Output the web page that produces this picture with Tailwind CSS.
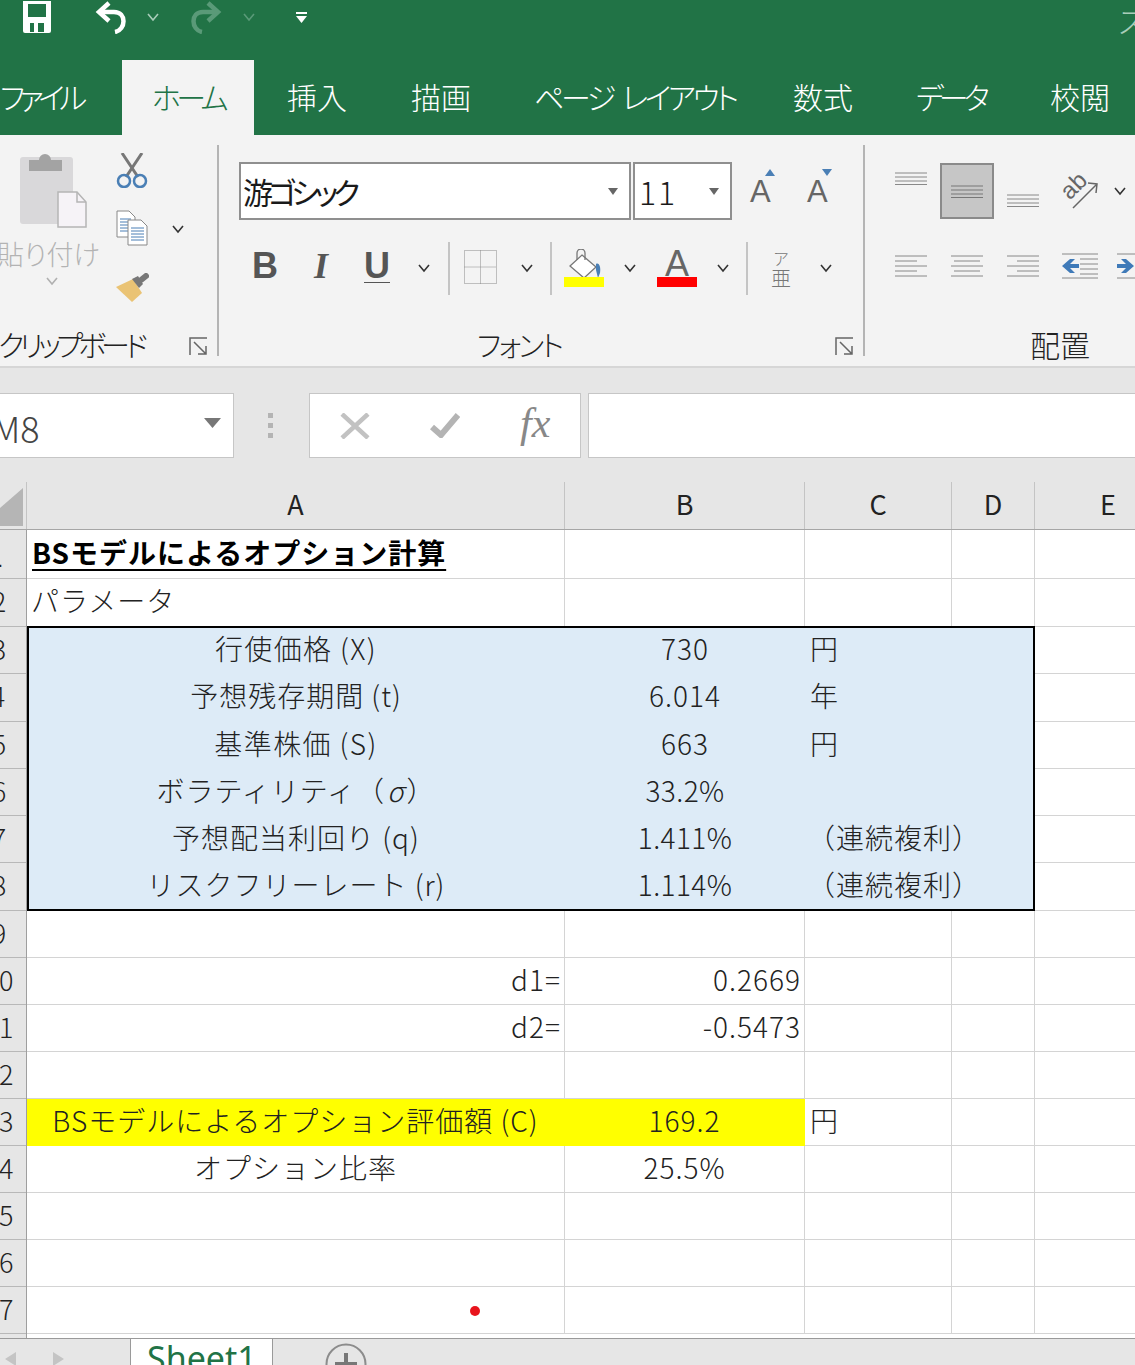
<!DOCTYPE html>
<html lang="ja">

<head>
  <meta charset="UTF-8">
  <title>Excel - BS model</title>
  <script src="https://cdn.jsdelivr.net/npm/@tailwindcss/browser@4"></script>
</head>

<body class="bg-white">
  <div class="w-[1135px] h-[1365px] overflow-hidden font-['Noto_Sans_CJK_JP',sans-serif] font-light text-[#222]">

    <!-- Title bar -->
    <div class="h-[60px] bg-[#217346] flex items-start relative overflow-hidden">
      <svg class="ml-[21px] w-[32px] h-[34px] shrink-0" viewBox="0 0 32 34">
        <path fill="#fff" d="M2 1h28v30a2 2 0 0 1-2 2H4a2 2 0 0 1-2-2z" />
        <rect x="7" y="4" width="18" height="13" fill="#217346" />
        <rect x="8" y="22" width="16" height="11" fill="#fff" />
        <rect x="9" y="23" width="4" height="9" fill="#217346" />
        <rect x="17" y="23" width="6" height="9" fill="#217346" />
      </svg>
      <svg class="ml-[42px] w-[32px] h-[34px] shrink-0" viewBox="0 0 32 34" fill="none" stroke="#fff" stroke-width="4.500">
        <path d="M14 3 4 12l10 9" />
        <path d="M5 12h14c13 0 12 18 1 20" />
      </svg>
      <svg class="ml-[19px] mt-[13px] w-[14px] h-[9px] shrink-0" viewBox="0 0 14 9" fill="none" stroke="#a9cdb9" stroke-width="1.600"><path d="m2 1 5 6 5-6" /></svg>
      <svg class="ml-[30px] w-[32px] h-[34px] shrink-0" viewBox="0 0 32 34" fill="none" stroke="#5a9a78" stroke-width="4.500">
        <path d="m18 3 10 9-10 9" />
        <path d="M27 12H13C0 12 1 30 12 32" />
      </svg>
      <svg class="ml-[20px] mt-[13px] w-[14px] h-[9px] shrink-0" viewBox="0 0 14 9" fill="none" stroke="#5a9a78" stroke-width="1.600"><path d="m2 1 5 6 5-6" /></svg>
      <svg class="ml-[39px] mt-[11px] w-[13px] h-[13px] shrink-0" viewBox="0 0 13 13" fill="#fff">
        <rect x="1" y="1" width="11" height="2" />
        <path d="M1 5h11l-5.500 7z" />
      </svg>
      <span class="absolute left-[1117px] top-[0px] text-[30px] leading-[40px] text-[#a9cdb9]">ス</span>
    </div>

    <!-- Tabs -->
    <div class="h-[75px] bg-[#217346] flex text-[30px] leading-none text-white whitespace-nowrap [font-feature-settings:'palt'] *:shrink-0 *:pt-[21px]">
      <div class="w-[122px] tracking-[-5.500px]">ファイル</div>
      <div class="w-[132px] bg-[#f3f3f3] text-[#217346] text-center tracking-[-4.500px]">ホーム</div>
      <div class="ml-[33px] w-[60px]">挿入</div>
      <div class="ml-[64px] w-[60px]">描画</div>
      <div class="ml-[63px] w-[196px] tracking-[-3.400px] [word-spacing:6px]">ページ レイアウト</div>
      <div class="ml-[63px] w-[60px]">数式</div>
      <div class="ml-[63px] w-[71px] tracking-[-5px]">データ</div>
      <div class="ml-[63px] w-[60px]">校閲</div>
    </div>

    <!-- Ribbon -->
    <div class="h-[233px] bg-[#f3f3f3] border-b-2 border-[#d6d6d6] flex">

      <!-- Clipboard group -->
      <div class="w-[217px] flex flex-col shrink-0">
        <div class="h-[188px] flex">
          <div class="w-[104px] flex flex-col pt-[18px]">
            <svg class="ml-[20px] w-[67px] h-[75px]" viewBox="0 0 67 75">
              <rect x="0" y="4" width="53" height="67" rx="3" fill="#d9d8da" />
              <path fill="#a3a3a3" d="M9 7h10a6 6 0 0 1 12 0h11v11H9z" />
              <path fill="#f6f3f7" stroke="#b5b5b5" stroke-width="1.500" d="M38 39h19l9 10v25H38z" />
              <path fill="none" stroke="#b5b5b5" stroke-width="1.500" d="M57 39v10h9" />
            </svg>
            <span class="text-[#b3b3b3] text-[27px] leading-none -ml-[3px] mt-[12px] whitespace-nowrap [font-feature-settings:'palt']">貼り付け</span>
            <svg class="ml-[45px] mt-[10px] w-[14px] h-[9px]" viewBox="0 0 14 9" fill="none" stroke="#b0b0b0" stroke-width="1.600"><path d="m2 1 5 6 5-6" /></svg>
          </div>
          <div class="ml-[12px] w-[34px] flex flex-col pt-[18px]">
            <svg class="w-[32px] h-[35px]" viewBox="0 0 32 35">
              <path stroke="#777" stroke-width="3" fill="none" d="M6 0l16 24M26 0 10 24" />
              <circle cx="8" cy="28" r="6" fill="none" stroke="#4a7fb5" stroke-width="2.500" />
              <circle cx="24" cy="28" r="6" fill="none" stroke="#4a7fb5" stroke-width="2.500" />
            </svg>
            <svg class="mt-[22px] w-[32px] h-[36px]" viewBox="0 0 32 36">
              <path fill="#fff" stroke="#888" d="M1 1h12l6 6v20H1z" />
              <path stroke="#4a7fb5" d="M4 9h11M4 12h11M4 15h11M4 18h11M4 21h11" />
              <path fill="#fff" stroke="#888" d="M12 10h13l6 6v19H12z" />
              <path stroke="#4a7fb5" d="M15 18h13M15 21h13M15 24h13M15 27h13M15 30h13" />
            </svg>
            <svg class="mt-[27px] w-[33px] h-[29px]" viewBox="0 0 33 29">
              <path fill="#eac374" d="M0 14 17 6l9 14-10 9z" />
              <path fill="#777" d="m16 6 6-3 5 8-4 4z" />
              <path stroke="#777" stroke-width="6" stroke-linecap="round" d="m25 7 5-4" />
            </svg>
          </div>
          <svg class="ml-[21px] mt-[90px] w-[14px] h-[9px]" viewBox="0 0 14 9" fill="none" stroke="#333" stroke-width="1.600"><path d="m2 1 5 6 5-6" /></svg>
        </div>
        <div class="h-[44px] flex items-center">
          <span class="text-[29px] leading-none whitespace-nowrap tracking-[-4.800px] [font-feature-settings:'palt'] -ml-[2px]">クリップボード</span>
          <svg class="ml-auto mr-[9px] mt-[4px] w-[19px] h-[19px]" viewBox="0 0 19 19" fill="none" stroke="#666" stroke-width="1.500">
            <path d="M1 18V1h17M5 5l12 12M17 9v8H9" />
          </svg>
        </div>
      </div>
      <div class="w-[2px] h-[211px] mt-[10px] bg-[#b4b4b4] shrink-0"></div>

      <!-- Font group -->
      <div class="w-[644px] flex flex-col shrink-0">
        <div class="h-[188px] flex flex-col">
          <div class="mt-[27px] h-[58px] flex items-center">
            <div class="ml-[20px] w-[392px] h-[58px] bg-white border-2 border-[#8f8f8f] flex items-center pl-[2px] pr-[10px]">
              <span class="text-[30px] leading-none text-[#1a1a1a] font-normal tracking-[-4.800px] [font-feature-settings:'palt']">游ゴシック</span>
              <svg class="ml-auto w-[12px] h-[7px]" viewBox="0 0 12 7" fill="#666"><path d="M1 0h10L6 7z" /></svg>
            </div>
            <div class="ml-[2px] w-[99px] h-[58px] bg-white border-2 border-[#8f8f8f] flex items-center pl-[4px] pr-[10px]">
              <span class="text-[32px] leading-none text-[#1a1a1a] tracking-[2px]">11</span>
              <svg class="ml-auto w-[12px] h-[7px]" viewBox="0 0 12 7" fill="#666"><path d="M1 0h10L6 7z" /></svg>
            </div>
            <div class="ml-[18px] w-[30px] relative font-['Liberation_Sans',sans-serif] font-normal text-[31px] leading-none text-[#666]">A
              <svg class="absolute left-[14px] -top-[7px] w-[12px] h-[7px]" viewBox="0 0 12 7" fill="#4a7fb5"><path d="M1 7h10L6 0z" /></svg>
            </div>
            <div class="ml-[27px] w-[30px] relative font-['Liberation_Sans',sans-serif] font-normal text-[31px] leading-none text-[#666]">A
              <svg class="absolute left-[14px] -top-[7px] w-[12px] h-[7px]" viewBox="0 0 12 7" fill="#4a7fb5"><path d="M1 0h10L6 7z" /></svg>
            </div>
          </div>
          <div class="mt-[22px] h-[53px] flex items-center">
            <span class="ml-[23px] w-[46px] text-center font-['Liberation_Sans',sans-serif] font-bold text-[36px] leading-none text-[#555] mb-[6px]">B</span>
            <span class="w-[66px] text-center font-['Liberation_Serif',serif] italic font-bold text-[36px] leading-none text-[#555] mb-[6px]">I</span>
            <span class="w-[46px] text-center font-['Liberation_Sans',sans-serif] font-bold text-[36px] leading-none text-[#555] mb-[6px] underline decoration-1 underline-offset-[4px]">U</span>
            <svg class="ml-[17px] w-[14px] h-[9px]" viewBox="0 0 14 9" fill="none" stroke="#333" stroke-width="1.600"><path d="m2 1 5 6 5-6" /></svg>
            <div class="ml-[17px] w-[2px] h-[53px] bg-[#c4c4c4]"></div>
            <svg class="ml-[14px] mb-[3px] w-[33px] h-[34px]" viewBox="0 0 33 34" fill="none" stroke="#888" stroke-dasharray="1 1">
              <path d="M.5.500h32v33H.5zM16.500.500v33M.5 17h32" />
            </svg>
            <svg class="ml-[23px] w-[14px] h-[9px]" viewBox="0 0 14 9" fill="none" stroke="#333" stroke-width="1.600"><path d="m2 1 5 6 5-6" /></svg>
            <div class="ml-[16px] w-[2px] h-[53px] bg-[#c4c4c4]"></div>
            <div class="ml-[12px] w-[40px] h-[39px] flex flex-col items-center -mt-[1px]">
              <svg class="w-[36px] h-[29px] -mb-[1px]" viewBox="0 0 36 29">
                <path fill="#fff" stroke="#777" stroke-width="1.300" d="M16 6 30 18 18 29 4 17z" />
                <path fill="none" stroke="#777" stroke-width="1.300" d="M11 11V4a4 4 0 0 1 8 0v7" />
                <path fill="#4a7fb5" d="M30 15c3-2 5 3 4 9l-2 5-2-8z" />
              </svg>
              <div class="w-[40px] h-[10px] bg-[#ffff00]"></div>
            </div>
            <svg class="ml-[19px] w-[14px] h-[9px]" viewBox="0 0 14 9" fill="none" stroke="#333" stroke-width="1.600"><path d="m2 1 5 6 5-6" /></svg>
            <div class="ml-[20px] w-[40px] h-[37px] flex flex-col items-center">
              <span class="font-['Liberation_Sans',sans-serif] font-normal text-[36px] leading-[27px] text-[#666]">A</span>
              <div class="w-[40px] h-[10px] bg-[#ff0000]"></div>
            </div>
            <svg class="ml-[19px] w-[14px] h-[9px]" viewBox="0 0 14 9" fill="none" stroke="#333" stroke-width="1.600"><path d="m2 1 5 6 5-6" /></svg>
            <div class="ml-[16px] w-[2px] h-[53px] bg-[#c4c4c4]"></div>
            <div class="ml-[21px] w-[24px] flex flex-col items-center gap-[2px] text-[#777] leading-none">
              <span class="text-[16px] h-[16px]">ア</span>
              <span class="text-[20px] h-[20px]">亜</span>
            </div>
            <svg class="ml-[26px] w-[14px] h-[9px]" viewBox="0 0 14 9" fill="none" stroke="#333" stroke-width="1.600"><path d="m2 1 5 6 5-6" /></svg>
          </div>
        </div>
        <div class="h-[44px] flex items-center">
          <span class="ml-[258px] text-[29px] leading-none tracking-[-2.700px] [font-feature-settings:'palt']">フォント</span>
          <svg class="ml-auto mr-[9px] mt-[4px] w-[19px] h-[19px]" viewBox="0 0 19 19" fill="none" stroke="#666" stroke-width="1.500">
            <path d="M1 18V1h17M5 5l12 12M17 9v8H9" />
          </svg>
        </div>
      </div>
      <div class="w-[2px] h-[211px] mt-[10px] bg-[#b4b4b4] shrink-0"></div>

      <!-- Alignment group -->
      <div class="flex-1 flex flex-col overflow-hidden">
        <div class="h-[188px] flex flex-col">
          <div class="mt-[27px] h-[58px] flex items-center shrink-0">
            <svg class="ml-[30px] self-start mt-[10px] w-[32px] h-[13px] shrink-0" viewBox="0 0 32 13" stroke="#888"><path d="M0 1h32M0 5h32M0 9h32M0 12.500h32" /></svg>
            <div class="ml-[13px] w-[54px] h-[56px] bg-[#c6c6c6] border-2 border-[#8a8a8a] flex items-center justify-center shrink-0">
              <svg class="w-[32px] h-[13px]" viewBox="0 0 32 13" stroke="#777"><path d="M0 1h32M0 5h32M0 9h32M0 12.500h32" /></svg>
            </div>
            <svg class="ml-[13px] self-end mb-[13px] w-[32px] h-[13px] shrink-0" viewBox="0 0 32 13" stroke="#888"><path d="M0 1h32M0 5h32M0 9h32M0 12.500h32" /></svg>
            <svg class="ml-[23px] w-[36px] h-[35px] shrink-0 overflow-visible" viewBox="0 0 36 35" fill="none" stroke="#666" stroke-width="1.500">
              <path d="m11 34 24-24M26 9l9 1-1 9" />
              <text x="0" y="20" transform="rotate(-45 12 14)" font-family="Liberation Sans, sans-serif" font-size="24" fill="#666" stroke="none">ab</text>
            </svg>
            <svg class="ml-[15px] w-[14px] h-[9px] shrink-0" viewBox="0 0 14 9" fill="none" stroke="#333" stroke-width="1.600"><path d="m2 1 5 6 5-6" /></svg>
          </div>
          <div class="mt-[33px] h-[26px] flex items-center shrink-0">
            <svg class="ml-[30px] w-[32px] h-[22px] shrink-0" viewBox="0 0 32 22" stroke="#888"><path d="M0 1h32M0 6h22M0 11h32M0 16h22M0 21h32" /></svg>
            <svg class="ml-[24px] w-[32px] h-[22px] shrink-0" viewBox="0 0 32 22" stroke="#888"><path d="M0 1h32M3 6h26M0 11h32M3 16h26M0 21h32" /></svg>
            <svg class="ml-[24px] w-[32px] h-[22px] shrink-0" viewBox="0 0 32 22" stroke="#888"><path d="M0 1h32M10 6h22M0 11h32M10 16h22M0 21h32" /></svg>
            <svg class="ml-[23px] w-[36px] h-[26px] shrink-0" viewBox="0 0 36 26">
              <path stroke="#888" d="M0 1h36M18 6h18M18 11h18M18 16h18M18 21h18M0 25h36" />
              <path fill="#3f7ab8" d="M0 13 8 6h5l-5 5h9v4H8l5 5H8z" />
            </svg>
            <svg class="ml-[19px] w-[36px] h-[26px] shrink-0" viewBox="0 0 36 26">
              <path stroke="#888" d="M0 1h36M0 25h36" />
              <path fill="#3f7ab8" d="M17 13 9 6H4l5 5H0v4h9l-5 5h5z" />
            </svg>
          </div>
        </div>
        <div class="h-[44px] flex items-center">
          <span class="ml-[165px] text-[30px] leading-none">配置</span>
        </div>
      </div>
    </div>

    <!-- Formula bar -->
    <div class="h-[114px] bg-[#e6e6e6] pt-[25px] flex items-start">
      <div class="w-[234px] h-[65px] bg-white border border-l-0 border-[#c6c6c6] flex items-center pr-[12px] overflow-hidden">
        <span class="-ml-[8px] text-[36px] leading-none text-[#444] mt-[3px]">M8</span>
        <svg class="ml-auto -mt-[5px] w-[17px] h-[10px]" viewBox="0 0 17 10" fill="#777"><path d="M0 0h17L8.500 10z" /></svg>
      </div>
      <div class="ml-[34px] mt-[20px] w-[5px] flex flex-col gap-[5px]">
        <div class="h-[5px] bg-[#b4b4b4]"></div>
        <div class="h-[5px] bg-[#b4b4b4]"></div>
        <div class="h-[5px] bg-[#b4b4b4]"></div>
      </div>
      <div class="ml-[36px] w-[272px] h-[65px] bg-white border border-[#c6c6c6] flex items-center">
        <svg class="ml-[30px] w-[30px] h-[26px]" viewBox="0 0 30 26" fill="none" stroke="#c2c2c2" stroke-width="4.500"><path d="m2 1 26 24M28 1 2 25" /></svg>
        <svg class="ml-[60px] w-[30px] h-[25px]" viewBox="0 0 30 25" fill="none" stroke="#b4b4b4" stroke-width="6"><path d="m2 14 9 8L28 2" /></svg>
        <span class="ml-[60px] w-[32px] -mt-[5px] font-['Liberation_Serif',serif] italic text-[42px] leading-none text-[#888]">fx</span>
      </div>
      <div class="ml-[7px] flex-1 h-[65px] bg-white border border-r-0 border-[#c6c6c6]"></div>
    </div>

    <!-- Column header -->
    <div class="h-[48px] bg-[#e6e6e6] flex border-b border-[#a6a6a6] text-[27px] leading-none text-[#222] font-normal overflow-hidden *:flex *:items-center *:justify-center *:pb-[5px] *:shrink-0 *:border-r *:border-[#c4c4c4]">
      <div class="w-[27px] !items-end !justify-start !pb-0">
        <svg class="mb-[3px] w-[23px] h-[38px]" viewBox="0 0 23 38" fill="#b5b5b5"><path d="M23 0v38H0V20z" /></svg>
      </div>
      <div class="w-[538px]">A</div>
      <div class="w-[240px]">B</div>
      <div class="w-[147px]">C</div>
      <div class="w-[83px]">D</div>
      <div class="w-[147px]">E</div>
    </div>

    <!-- Sheet -->
    <div class="h-[808px] flex overflow-hidden">
      <!-- Row numbers, centred on the window edge because the window is scrolled -->
      <div class="w-[27px] shrink-0 bg-[#e6e6e6] border-r border-[#9f9f9f] text-[27px] leading-none text-[#222] *:border-b *:border-[#b8b8b8] *:flex *:items-center *:overflow-hidden *:pb-[4px]">
        <div class="h-[49px]"><span class="-ml-[45px] w-[80px] shrink-0 text-center mt-[10px] font-['DejaVu_Sans',sans-serif] font-normal">1</span></div>
        <div class="h-[48px]"><span class="-ml-[41px] w-[80px] shrink-0 text-center">2</span></div>
        <div class="h-[47px]"><span class="-ml-[41px] w-[80px] shrink-0 text-center">3</span></div>
        <div class="h-[48px]"><span class="-ml-[42px] w-[80px] shrink-0 text-center">4</span></div>
        <div class="h-[47px]"><span class="-ml-[41px] w-[80px] shrink-0 text-center">5</span></div>
        <div class="h-[47px]"><span class="-ml-[41px] w-[80px] shrink-0 text-center">6</span></div>
        <div class="h-[47px]"><span class="-ml-[41px] w-[80px] shrink-0 text-center">7</span></div>
        <div class="h-[48px]"><span class="-ml-[41px] w-[80px] shrink-0 text-center">8</span></div>
        <div class="h-[47px]"><span class="-ml-[41px] w-[80px] shrink-0 text-center">9</span></div>
        <div class="h-[47px]"><span class="-ml-[41px] w-[80px] shrink-0 text-center">10</span></div>
        <div class="h-[47px]"><span class="-ml-[41px] w-[80px] shrink-0 text-center">11</span></div>
        <div class="h-[47px]"><span class="-ml-[41px] w-[80px] shrink-0 text-center">12</span></div>
        <div class="h-[47px]"><span class="-ml-[41px] w-[80px] shrink-0 text-center">13</span></div>
        <div class="h-[47px]"><span class="-ml-[41px] w-[80px] shrink-0 text-center">14</span></div>
        <div class="h-[47px]"><span class="-ml-[41px] w-[80px] shrink-0 text-center">15</span></div>
        <div class="h-[47px]"><span class="-ml-[41px] w-[80px] shrink-0 text-center">16</span></div>
        <div class="h-[47px]"><span class="-ml-[41px] w-[80px] shrink-0 text-center">17</span></div>
      </div>

      <div class="flex-1 relative text-[28px] leading-none tracking-[1px] text-[#222] whitespace-nowrap">
        <!-- Rows 1-2 -->
        <div class="h-[49px] grid grid-cols-[538px_240px_147px_83px_101px] *:border-r *:border-b *:border-[#d4d4d4]">
          <div class="flex items-center pl-[5px] pb-[4px]"><span class="font-bold text-black tracking-[1px] underline decoration-2 underline-offset-[5px]">BSモデルによるオプション計算</span></div>
          <div></div><div></div><div></div><div></div>
        </div>
        <div class="h-[48px] grid grid-cols-[538px_240px_147px_83px_101px] *:border-r *:border-b *:border-[#d4d4d4]">
          <div class="flex items-center pl-[4px] pb-[5px]">パラメータ</div>
          <div></div><div></div><div></div><div></div>
        </div>

        <!-- Rows 3-8 -->
        <div class="h-[47px] grid grid-cols-[538px_240px_147px_83px_101px] *:flex *:items-center *:pb-[6px]">
          <div class="bg-[#ddebf7] justify-center tracking-[1.400px]">行使価格 (X)</div>
          <div class="bg-[#ddebf7] justify-center">730</div>
          <div class="bg-[#ddebf7] col-span-2 pl-[5px]">円</div>
          <div class="border-b border-[#d4d4d4]"></div>
        </div>
        <div class="h-[48px] grid grid-cols-[538px_240px_147px_83px_101px] *:flex *:items-center *:pb-[6px]">
          <div class="bg-[#ddebf7] justify-center">予想残存期間 (t)</div>
          <div class="bg-[#ddebf7] justify-center">6.014</div>
          <div class="bg-[#ddebf7] col-span-2 pl-[5px]">年</div>
          <div class="border-b border-[#d4d4d4]"></div>
        </div>
        <div class="h-[47px] grid grid-cols-[538px_240px_147px_83px_101px] *:flex *:items-center *:pb-[6px]">
          <div class="bg-[#ddebf7] justify-center tracking-[1.400px]">基準株価 (S)</div>
          <div class="bg-[#ddebf7] justify-center">663</div>
          <div class="bg-[#ddebf7] col-span-2 pl-[5px]">円</div>
          <div class="border-b border-[#d4d4d4]"></div>
        </div>
        <div class="h-[47px] grid grid-cols-[538px_240px_147px_83px_101px] *:flex *:items-center *:pb-[6px]">
          <div class="bg-[#ddebf7] justify-center"><span>ボラティリティ（<i class="px-[2px]">σ</i>）</span></div>
          <div class="bg-[#ddebf7] justify-center tracking-[0.400px]">33.2%</div>
          <div class="bg-[#ddebf7] col-span-2 pl-[5px]"></div>
          <div class="border-b border-[#d4d4d4]"></div>
        </div>
        <div class="h-[47px] grid grid-cols-[538px_240px_147px_83px_101px] *:flex *:items-center *:pb-[6px]">
          <div class="bg-[#ddebf7] justify-center">予想配当利回り (q)</div>
          <div class="bg-[#ddebf7] justify-center tracking-[0.400px]">1.411%</div>
          <div class="bg-[#ddebf7] col-span-2 pl-[2px]">（連続複利）</div>
          <div class="border-b border-[#d4d4d4]"></div>
        </div>
        <div class="h-[48px] grid grid-cols-[538px_240px_147px_83px_101px] *:flex *:items-center *:pb-[6px]">
          <div class="bg-[#ddebf7] justify-center">リスクフリーレート (r)</div>
          <div class="bg-[#ddebf7] justify-center tracking-[0.400px]">1.114%</div>
          <div class="bg-[#ddebf7] col-span-2 pl-[2px]">（連続複利）</div>
          <div class="border-b border-[#d4d4d4]"></div>
        </div>

        <!-- Rows 9-17 -->
        <div class="h-[47px] grid grid-cols-[538px_240px_147px_83px_101px] *:border-r *:border-b *:border-[#d4d4d4]">
          <div></div><div></div><div></div><div></div><div></div>
        </div>
        <div class="h-[47px] grid grid-cols-[538px_240px_147px_83px_101px] *:border-r *:border-b *:border-[#d4d4d4] *:flex *:items-center *:justify-end *:pr-[3px] *:pb-[5px]">
          <div>d1=</div><div>0.2669</div><div></div><div></div><div></div>
        </div>
        <div class="h-[47px] grid grid-cols-[538px_240px_147px_83px_101px] *:border-r *:border-b *:border-[#d4d4d4] *:flex *:items-center *:justify-end *:pr-[3px] *:pb-[5px]">
          <div>d2=</div><div>-0.5473</div><div></div><div></div><div></div>
        </div>
        <div class="h-[47px] grid grid-cols-[538px_240px_147px_83px_101px] *:border-r *:border-b *:border-[#d4d4d4]">
          <div></div><div></div><div></div><div></div><div></div>
        </div>
        <div class="h-[47px] grid grid-cols-[538px_240px_147px_83px_101px] *:border-r *:border-b *:border-[#d4d4d4] *:flex *:items-center *:pb-[5px]">
          <div class="bg-[#ffff00] justify-center !border-[#ffff00]">BSモデルによるオプション評価額 (C)</div>
          <div class="bg-[#ffff00] justify-center !border-[#ffff00]">169.2</div>
          <div class="pl-[5px]">円</div><div></div><div></div>
        </div>
        <div class="h-[47px] grid grid-cols-[538px_240px_147px_83px_101px] *:border-r *:border-b *:border-[#d4d4d4] *:flex *:items-center *:justify-center *:pb-[5px]">
          <div>オプション比率</div><div>25.5%</div><div></div><div></div><div></div>
        </div>
        <div class="h-[47px] grid grid-cols-[538px_240px_147px_83px_101px] *:border-r *:border-b *:border-[#d4d4d4]">
          <div></div><div></div><div></div><div></div><div></div>
        </div>
        <div class="h-[47px] grid grid-cols-[538px_240px_147px_83px_101px] *:border-r *:border-b *:border-[#d4d4d4]">
          <div></div><div></div><div></div><div></div><div></div>
        </div>
        <div class="h-[47px] grid grid-cols-[538px_240px_147px_83px_101px] *:border-r *:border-b *:border-[#d4d4d4]">
          <div></div><div></div><div></div><div></div><div></div>
        </div>

        <!-- Frame round the parameter block, red cursor dot -->
        <div class="absolute left-0 top-[96px] w-[1008px] h-[285px] border-2 border-black pointer-events-none"></div>
        <div class="absolute left-[443px] top-[776px] w-[10px] h-[10px] rounded-full bg-[#e8141c]"></div>
      </div>
    </div>

    <!-- Sheet tabs -->
    <div class="h-[27px] bg-[#e6e6e6] flex items-start border-t border-[#9a9a9a] overflow-hidden">
      <svg class="mt-[13px] ml-[5px] w-[11px] h-[14px]" viewBox="0 0 11 14" fill="#c4c4c4"><path d="M11 0v14L0 7z" /></svg>
      <svg class="mt-[13px] ml-[37px] w-[11px] h-[14px]" viewBox="0 0 11 14" fill="#c4c4c4"><path d="M0 0v14l11-7z" /></svg>
      <div class="ml-[66px] w-[143px] h-[40px] bg-white border-x border-[#9a9a9a] -mt-[1px] pl-[16px] pt-[3px] font-['Noto_Sans',sans-serif] font-normal text-[34px] leading-none text-[#217346]">Sheet1</div>
      <svg class="ml-[52px] mt-[4px] w-[42px] h-[42px]" viewBox="0 0 42 42" fill="none">
        <circle cx="21" cy="21" r="19.500" stroke="#8c8c8c" stroke-width="2" />
        <path d="M21 10v22M10 21h22" stroke="#777" stroke-width="4" />
      </svg>
    </div>
  </div>
</body>

</html>
